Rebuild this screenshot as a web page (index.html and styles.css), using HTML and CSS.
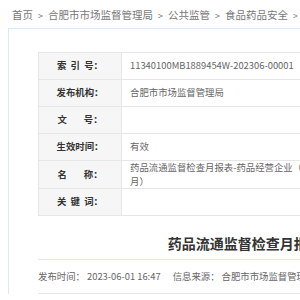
FILE: index.html
```html
<!DOCTYPE html>
<html lang="zh-CN">
<head>
  <meta charset="utf-8"/>
  <title>药品流通监督检查月报表</title>
  <link rel="stylesheet" href="styles.css">
</head>
<body>
  <div class="crumb">
    <a href="#">首页</a><span class="sep">&gt;</span><a href="#">合肥市市场监督管理局</a><span class="sep">&gt;</span><a href="#">公共监管</a><span class="sep">&gt;</span><a href="#">食品药品安全</a><span class="sep">&gt;</span><a href="#">监督检查</a>
  </div>

  <div class="box">
    <div class="content">
      <table class="info">
        <tr>
          <th>索&nbsp;&nbsp;引&nbsp;&nbsp;号：</th>
          <td>11340100MB1889454W-202306-00001</td>
        </tr>
        <tr>
          <th>发布机构：</th>
          <td>合肥市市场监督管理局</td>
        </tr>
        <tr>
          <th>文&nbsp;&nbsp;&nbsp;&nbsp;&nbsp;&nbsp;&nbsp;&nbsp;号：</th>
          <td></td>
        </tr>
        <tr>
          <th>生效时间：</th>
          <td>有效</td>
        </tr>
        <tr>
          <th>名&nbsp;&nbsp;&nbsp;&nbsp;&nbsp;&nbsp;&nbsp;&nbsp;称：</th>
          <td>药品流通监督检查月报表-药品经营企业（2023年5月）</td>
        </tr>
        <tr>
          <th>关&nbsp;&nbsp;键&nbsp;&nbsp;词：</th>
          <td></td>
        </tr>
      </table>

      <h1 class="title">药品流通监督检查月报表-药品经营企业（2023年5月）</h1>

      <div class="meta">
        <span>发布时间： 2023-06-01 16:47</span>
        <span>信息来源： 合肥市市场监督管理局</span>
      </div>
    </div>
  </div>
</body>
</html>
```

FILE: styles.css
```css
body {
  margin: 0;
  font-family: "Noto Sans CJK SC", sans-serif;
  background: #fff;
  overflow: hidden;
}
.crumb {
  padding: 9px 0 0 12px;
  height: 19px;
  font-size: 10.5px;
  line-height: 12px;
  color: #777;
  white-space: nowrap;
}
.crumb a {
  color: #777;
  text-decoration: none;
}
.crumb .sep {
  margin: 0 5px;
  font-size: 9px;
}
.box {
  margin-left: 8px;
  width: 1000px;
  border-top: 1px solid #dbe8f6;
  border-left: 1px solid #dbe8f6;
  padding: 23px 0 0 29px;
}
.content {
  width: 600px;
}
.info {
  border-collapse: collapse;
  font-size: 9.4px;
  line-height: 13.5px;
}
.info th,
.info td {
  border: 1px solid #e6e6e6;
  height: 26px;
  padding: 0 8px;
}
.info th {
  width: 66px;
  background: #f6f6f6;
  color: #333;
  font-weight: bold;
  text-align: center;
  white-space: nowrap;
}
.info td {
  width: 218px;
  color: #666;
  text-align: left;
}
.title {
  margin: 17px 0 0;
  padding-bottom: 6px;
  border-bottom: 1px solid #dce9f6;
  font-size: 14px;
  line-height: 20px;
  color: #333;
  text-align: center;
  white-space: nowrap;
}
.meta {
  display: flex;
  gap: 12px;
  height: 33px;
  line-height: 33px;
  font-size: 9.4px;
  color: #666;
  border-bottom: 1px solid #e8e8e8;
}
```
